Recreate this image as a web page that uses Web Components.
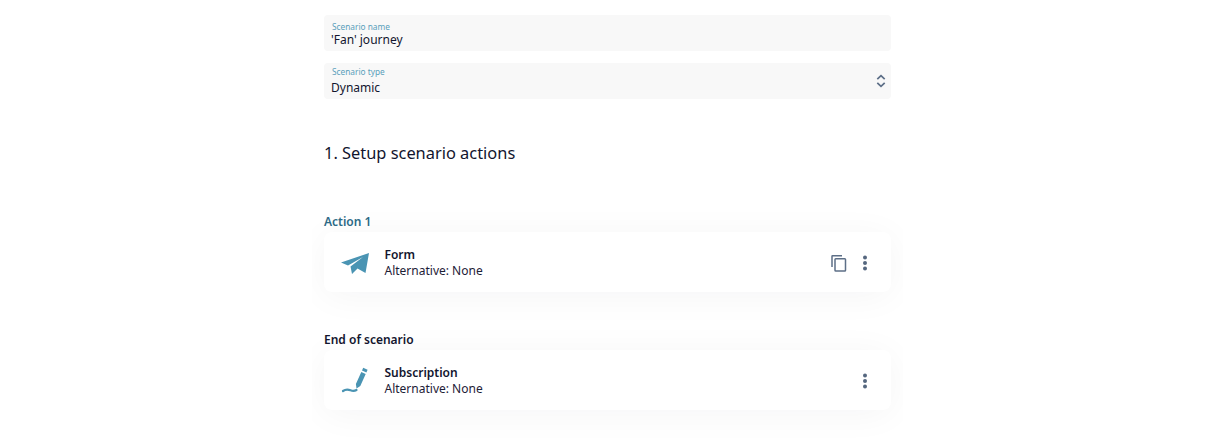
<!DOCTYPE html>
<html lang="en">
<head>
<meta charset="utf-8">
<title>Scenario</title>
<style>
  html, body { margin: 0; background: #fff; }
  body { font-family: "Noto Sans", "Open Sans", sans-serif; color: #12152e; height: 448px; overflow: hidden; }
</style>
</head>
<body>
<template id="field-tpl">
  <style>
    :host { display: block; height: 36px; margin-bottom: 12px; background: #f8f8f8; border-radius: 4px; position: relative; box-sizing: border-box; padding: 7px 8px 0 7px; }
    .label { font-size: 8.3px; line-height: 9px; margin-left: 1px; color: #5a9fbb; }
    .value { font-size: 12px; line-height: 16px; margin-top: 1px; color: #12152e; }
    :host([select]) { padding-top: 4px; }
    :host([select]) .value { margin-top: 4px; }
    .arrows { position: absolute; right: 5px; top: 11px; width: 10px; height: 14px; display: none; }
    :host([select]) .arrows { display: block; }
  </style>
  <div class="label"></div>
  <div class="value"></div>
  <svg class="arrows" viewBox="0 0 10 14" fill="none" stroke="#5d6f87" stroke-width="1.7">
    <path d="M1.3 5.2 5 1.6l3.7 3.6"/>
    <path d="M1.3 8.8 5 12.4l3.7-3.6"/>
  </svg>
</template>

<template id="card-tpl">
  <style>
    :host { display: block; }
    .title { font-size: 12px; line-height: 18px; font-weight: 600; height: 18px; margin-bottom: 1px; }
    :host([accent]) .title { color: #2c6a86; }
    .card { height: 60px; background: #fff; border-radius: 8px; box-shadow: 0 4px 36px rgba(20,30,50,.045); display: flex; align-items: center; padding: 0 17px 0 16px; box-sizing: border-box; }
    .icon { width: 30px; height: 30px; flex: none; margin-right: 14.500px; }
    .text { flex: 1; min-width: 0; font-size: 12px; line-height: 16.500px; padding-top: 2px; }
    .name { font-weight: 600; }
    .sub { color: #1d2036; margin-top: -.5px; }
    .actions { display: flex; align-items: center; gap: 8px; padding-top: 2px; }
  </style>
  <div class="title"><slot name="title"></slot></div>
  <div class="card">
    <div class="icon"><slot name="icon"></slot></div>
    <div class="text">
      <div class="name"><slot name="name"></slot></div>
      <div class="sub"><slot name="sub"></slot></div>
    </div>
    <div class="actions"><slot name="actions"></slot></div>
  </div>
</template>

<template id="page-tpl">
  <style>
    :host { display: block; width: 591px; margin-left: 312px; padding: 15px 12px 0; box-sizing: border-box; height: 448px; overflow: hidden; }
  </style>
  <slot></slot>
</template>

<scenario-page>
  <scenario-field label="Scenario name" value="'Fan' journey"></scenario-field>
  <scenario-field label="Scenario type" value="Dynamic" select></scenario-field>
  <scenario-heading>1. Setup scenario actions</scenario-heading>

  <scenario-card accent style="margin-top:49px">
    <span slot="title">Action 1</span>
    <svg slot="icon" width="30" height="30" viewBox="0 0 30 30"><path fill="#4a94b3" d="M1 15.500 29 6 25.500 26 17.500 21.500 12 27l-1.500-7.500L23 10 8 18.500z"/></svg>
    <span slot="name">Form</span>
    <span slot="sub">Alternative: None</span>
    <copy-icon slot="actions"></copy-icon>
    <more-icon slot="actions"></more-icon>
  </scenario-card>

  <scenario-card style="margin-top:39px">
    <span slot="title">End of scenario</span>
    <svg slot="icon" width="30" height="30" viewBox="0 0 30 30"><path fill="#4a94b3" d="M23.200 2.800l4.400 2-1.200 2.700-4.400-2zM21.300 7l4.400 2-5.400 12-3.800 2.600-.6-4.600z"/><path fill="none" stroke="#4a94b3" stroke-width="2.200" stroke-linecap="round" d="M3 26c2.800-2 5.300-1.600 7.500-.7 2.200.9 4 .9 6-.3"/></svg>
    <span slot="name">Subscription</span>
    <span slot="sub">Alternative: None</span>
    <more-icon slot="actions"></more-icon>
  </scenario-card>
</scenario-page>

<script>
  class ScenarioPage extends HTMLElement {
    constructor() {
      super();
      this.attachShadow({ mode: 'open' }).appendChild(document.getElementById('page-tpl').content.cloneNode(true));
    }
  }

  class ScenarioField extends HTMLElement {
    constructor() {
      super();
      const shadow = this.attachShadow({ mode: 'open' });
      shadow.appendChild(document.getElementById('field-tpl').content.cloneNode(true));
      shadow.querySelector('.label').textContent = this.getAttribute('label');
      shadow.querySelector('.value').textContent = this.getAttribute('value');
    }
  }

  class ScenarioHeading extends HTMLElement {
    constructor() {
      super();
      this.attachShadow({ mode: 'open' }).innerHTML = `
        <style>:host { display: block; font-size: 16.400px; line-height: 22px; padding-top: 31px; color: #12152e; }</style>
        <slot></slot>`;
    }
  }

  class ScenarioCard extends HTMLElement {
    constructor() {
      super();
      this.attachShadow({ mode: 'open' }).appendChild(document.getElementById('card-tpl').content.cloneNode(true));
    }
  }

  class CopyIcon extends HTMLElement {
    constructor() {
      super();
      this.attachShadow({ mode: 'open' }).innerHTML = `
        <style>:host { display: block; width: 18px; height: 18px; }</style>
        <svg width="18" height="18" viewBox="0 0 18 18" fill="none" stroke="#5d6f87" stroke-width="1.5">
          <path d="M2 13V2.300a.5.500 0 0 1 .5-.5H12"/>
          <rect x="5" y="4.800" width="10.500" height="12.200" rx=".8"/>
        </svg>`;
    }
  }

  class MoreIcon extends HTMLElement {
    constructor() {
      super();
      this.attachShadow({ mode: 'open' }).innerHTML = `
        <style>:host { display: block; width: 18px; height: 18px; }</style>
        <svg width="18" height="18" viewBox="0 0 18 18" fill="#55677f">
          <circle cx="9" cy="3.500" r="2"/><circle cx="9" cy="9" r="2"/><circle cx="9" cy="14.500" r="2"/>
        </svg>`;
    }
  }

  customElements.define('scenario-page', ScenarioPage);
  customElements.define('scenario-field', ScenarioField);
  customElements.define('scenario-heading', ScenarioHeading);
  customElements.define('scenario-card', ScenarioCard);
  customElements.define('copy-icon', CopyIcon);
  customElements.define('more-icon', MoreIcon);
</script>
</body>
</html>
